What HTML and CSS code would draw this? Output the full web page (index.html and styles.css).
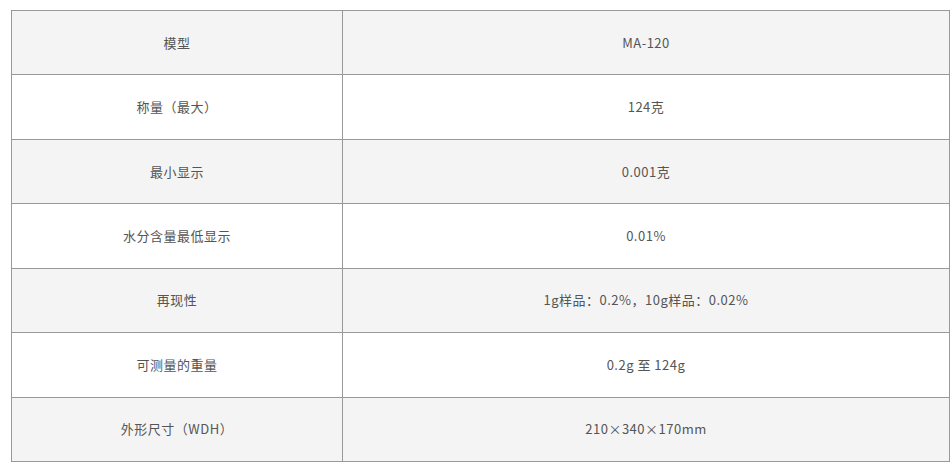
FILE: index.html
```html
<!DOCTYPE html>
<html lang="zh-CN">
<head>
<meta charset="utf-8">
<link rel="stylesheet" href="styles.css">
</head>
<body>
<table class="spec">
  <colgroup><col class="c1"><col class="c2"></colgroup>
  <tbody>
    <tr class="alt"><td>模型</td><td>MA-120</td></tr>
    <tr><td>称量（最大）</td><td>124克</td></tr>
    <tr class="alt"><td>最小显示</td><td>0.001克</td></tr>
    <tr><td>水分含量最低显示</td><td>0.01%</td></tr>
    <tr class="alt"><td>再现性</td><td>1g样品：0.2%，10g样品：0.02%</td></tr>
    <tr><td>可测量的重量</td><td>0.2g 至 124g</td></tr>
    <tr class="alt"><td>外形尺寸（WDH）</td><td>210×340×170mm</td></tr>
  </tbody>
</table>
</body>
</html>
```
FILE: styles.css
```css
html, body {
  margin: 0;
  padding: 0;
  background: #fff;
}
body {
  padding: 10px 0 0 11px;
  font-family: "Noto Sans CJK SC", "Noto Sans", sans-serif;
  font-size: 13px;
  letter-spacing: 0.5px;
  color: #555;
}
.spec {
  border-collapse: collapse;
  width: 939px;
  table-layout: fixed;
}
.c1 { width: 331px; }
.spec td {
  border: 1px solid #999;
  text-align: center;
  vertical-align: middle;
  height: 63.43px;
  padding: 0 8px;
  box-sizing: border-box;
  line-height: 20px;
}
.spec tr { height: 64.43px; }
.spec tr.alt td { background: #f4f4f4; }
```
